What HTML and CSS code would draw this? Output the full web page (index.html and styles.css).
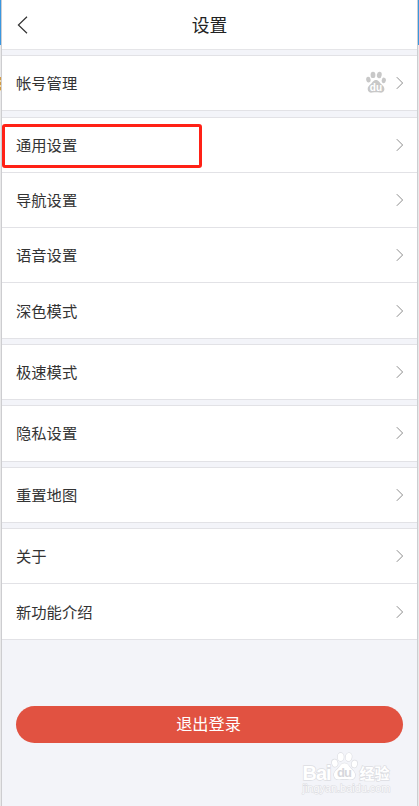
FILE: index.html
```html
<!DOCTYPE html>
<html lang="zh-CN">
<head>
  <meta charset="UTF-8">
  <title>设置</title>
  <link rel="stylesheet" href="styles.css">
</head>
<body>
  <!-- shared icons -->
  <svg class="symbols" width="0" height="0">
    <symbol id="arrow" viewBox="0 0 8 14">
      <path d="M0.8 1.2L6.6 7L0.8 12.8" fill="none" stroke="#8c8c8c" stroke-width="1"/>
    </symbol>
    <symbol id="paw" viewBox="0 0 20 22">
      <ellipse cx="2.4" cy="8.7" rx="2.2" ry="2.9" transform="rotate(-12 2.4 8.7)"/>
      <ellipse cx="7" cy="3.9" rx="2.4" ry="3.2"/>
      <ellipse cx="13.3" cy="4" rx="2.4" ry="3.2" transform="rotate(10 13.3 4)"/>
      <ellipse cx="17.8" cy="9.4" rx="2.1" ry="2.8" transform="rotate(10 17.8 9.4)"/>
      <path d="M10 8.9C7.2 8.9 6.6 11.4 4.8 13.1C2.8 14.8 1.5 16 1.7 18.3C1.9 20.8 3.9 22 6.2 21.6C9 21.1 11 21.1 13.8 21.6C16.2 22 18.3 20.7 18.4 18.3C18.5 16 16.9 14.7 15.2 13.1C13.4 11.4 12.8 8.9 10 8.9Z"/>
    </symbol>
  </svg>

  <div class="phone">
    <header class="header">
      <svg class="back" viewBox="0 0 11 18">
        <path d="M10 0.8L1.4 9L10 17.2" fill="none" stroke="#333" stroke-width="1.2"/>
      </svg>
      <h1>设置</h1>
    </header>

    <div class="group">
      <div class="row">
        <span>帐号管理</span>
        <svg class="account" viewBox="0 0 20 22">
          <use href="#paw"/>
          <text x="3.8" y="19.8" textLength="12.4">du</text>
        </svg>
        <svg class="arrow"><use href="#arrow"/></svg>
      </div>
    </div>

    <div class="group">
      <div class="row marked"><span>通用设置</span><svg class="arrow"><use href="#arrow"/></svg></div>
      <div class="row"><span>导航设置</span><svg class="arrow"><use href="#arrow"/></svg></div>
      <div class="row"><span>语音设置</span><svg class="arrow"><use href="#arrow"/></svg></div>
      <div class="row"><span>深色模式</span><svg class="arrow"><use href="#arrow"/></svg></div>
    </div>

    <div class="group">
      <div class="row"><span>极速模式</span><svg class="arrow"><use href="#arrow"/></svg></div>
    </div>

    <div class="group">
      <div class="row"><span>隐私设置</span><svg class="arrow"><use href="#arrow"/></svg></div>
    </div>

    <div class="group">
      <div class="row"><span>重置地图</span><svg class="arrow"><use href="#arrow"/></svg></div>
    </div>

    <div class="group">
      <div class="row"><span>关于</span><svg class="arrow"><use href="#arrow"/></svg></div>
      <div class="row"><span>新功能介绍</span><svg class="arrow"><use href="#arrow"/></svg></div>
    </div>

    <button class="logout">退出登录</button>
  </div>

  <div class="watermark">
    <svg viewBox="0 0 92 46">
      <text class="wm-logo" x="1.5" y="27.5" textLength="29">Bai</text>
      <use class="wm-paw" href="#paw" x="30" y="0" width="27" height="28"/>
      <text class="wm-du" x="36" y="25" textLength="15">du</text>
      <text class="wm-cn" x="58.5" y="26.5" textLength="30">经验</text>
      <text class="wm-url" x="1.5" y="39.5" textLength="88">jingyan.baidu.com</text>
    </svg>
  </div>
</body>
</html>
```
FILE: styles.css
```css
* {
  box-sizing: border-box;
}
body {
  margin: 0;
  height: 806px;
  padding: 0 1px;
  overflow: hidden;
  font-family: "Noto Sans CJK SC", sans-serif;
  color: #333;
  background: linear-gradient(#3a97e0 45px, #e9e9ea 45px);
}
/* sliver of the page behind the phone */
body::before {
  content: "";
  position: absolute;
  left: 0;
  top: 77px;
  width: 1px;
  height: 14px;
  background: repeating-linear-gradient(#d29a45 0 3px, #f0d9a8 3px 5px);
}
.symbols {
  position: absolute;
}
.phone {
  height: 806px;
  border-left: 1px solid #cdcdd0;
  border-right: 1px solid #cdcdd0;
  background: #f3f4f9;
}
.header {
  display: flex;
  align-items: center;
  height: 50px;
  padding: 0 15px;
  border-bottom: 1px solid #e5e5e8;
  background: #fff;
}
.header h1 {
  flex: 1;
  margin: 0 11px 2px 0;
  font-size: 17.8px;
  font-weight: 400;
  line-height: 26px;
  text-align: center;
  color: #222;
}
.back {
  width: 11px;
  height: 18px;
}
.group {
  margin-top: 5.2px;
  border-top: 1px solid #e2e2e6;
}
.row {
  display: flex;
  align-items: center;
  height: 55.25px;
  padding: 0 13px 0 14px;
  border-bottom: 1px solid #e2e2e6;
  background: #fff;
  font-size: 15.3px;
  line-height: 22px;
}
.row span {
  flex: 1;
  padding-bottom: 2px;
}
.arrow {
  width: 8px;
  height: 14px;
}
.account {
  width: 20px;
  height: 22px;
  margin: 0 10px 2px 0;
  fill: #c8c8c8;
}
.account text {
  font: bold 10px "Liberation Sans", sans-serif;
  fill: #fff;
}
.marked {
  position: relative;
}
.marked::after {
  content: "";
  position: absolute;
  left: 0;
  top: 6px;
  box-sizing: border-box;
  width: 200px;
  height: 44px;
  border: 3px solid #ff2116;
  border-radius: 3px;
}
.logout {
  display: block;
  width: 387px;
  height: 37px;
  margin: 66px 0 0 14px;
  padding: 0 2px 2px 0;
  border: 0;
  border-radius: 19px;
  background: #e15241;
  color: #fff;
  font-family: inherit;
  font-size: 16.2px;
  line-height: 35px;
}
.watermark {
  position: absolute;
  left: 301px;
  top: 752px;
  width: 92px;
  height: 46px;
}
.watermark svg {
  display: block;
  fill: #fff;
  stroke: #dcdde2;
  stroke-width: 1.4;
  paint-order: stroke;
}
.wm-logo {
  font: bold 20px "Liberation Sans", sans-serif;
}
.wm-paw {
  stroke-width: 1;
}
.wm-du {
  font: bold 13px "Liberation Sans", sans-serif;
  fill: #d6d7dc;
  stroke: none;
}
.wm-cn {
  font: bold 15px "Noto Sans CJK SC", sans-serif;
}
.wm-url {
  font: 11px "Liberation Sans", sans-serif;
  fill: #fafafc;
  stroke: #dadbe0;
  stroke-width: 1;
}
```
